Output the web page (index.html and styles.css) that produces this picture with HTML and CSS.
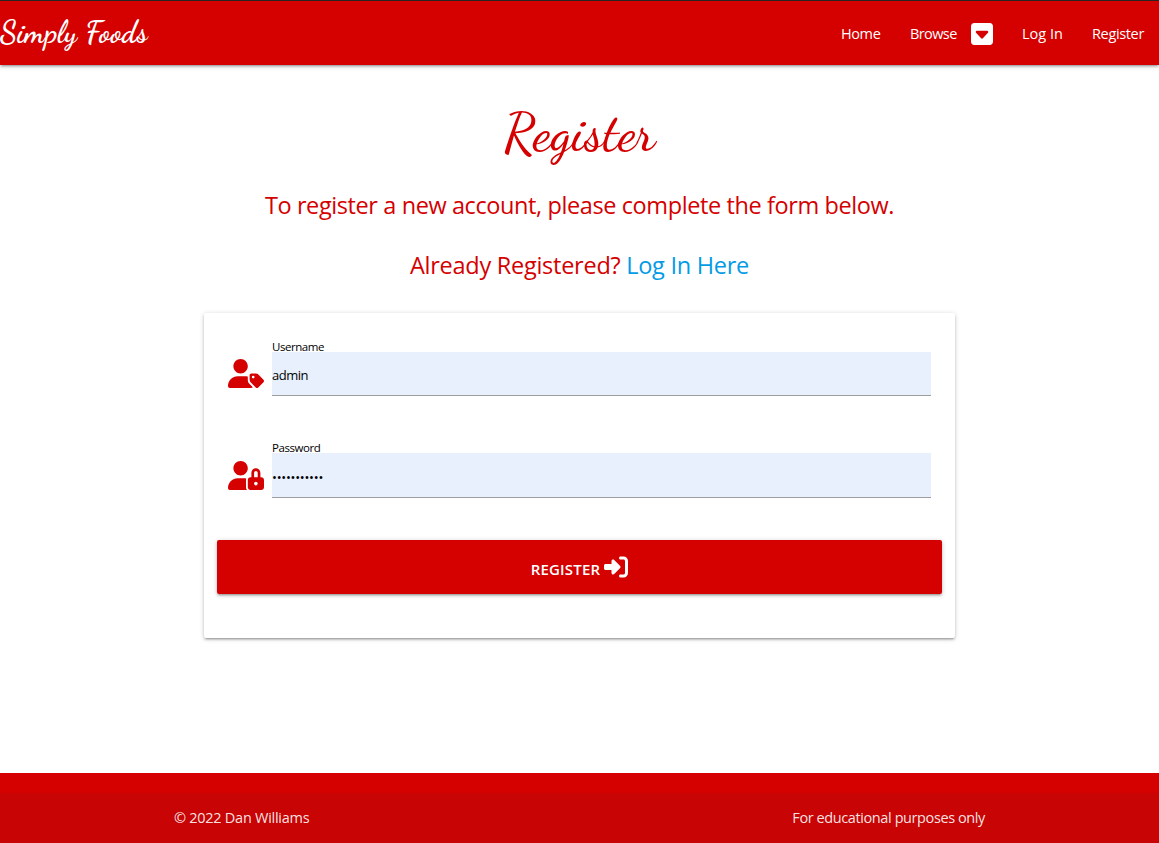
FILE: index.html
```html
<!DOCTYPE html>
<html lang="en">
<head>
<meta charset="utf-8">
<title>Simply Foods - Register</title>
<link rel="stylesheet" href="styles.css">
</head>
<body>
<header class="navbar">
  <a class="brand">Simply Foods</a>
  <nav class="nav-links">
    <a class="nav-home">Home</a>
    <a class="nav-browse">Browse</a>
    <svg class="caret-icon" viewBox="0 32 448 448"><path fill="#fff" d="M384 32H64C28.7 32 0 60.7 0 96v320c0 35.300 28.700 64 64 64h320c35.300 0 64-28.700 64-64V96c0-35.300-28.700-64-64-64zM345.600 232.300l-104 112C237 349.200 230.700 352 224 352s-13-2.800-17.600-7.700l-104-112c-6.500-7-8.200-17.200-4.400-25.900S110.500 192 120 192h208c9.500 0 18.200 5.700 22 14.400s2.100 18.900-4.400 25.900z"/></svg>
    <a class="nav-login">Log In</a>
    <a class="nav-register">Register</a>
  </nav>
</header>
<main class="content">
  <h1 class="title">Register</h1>
  <p class="lead lead-intro">To register a new account, please complete the form below.</p>
  <p class="lead lead-login">Already Registered? <a class="login-link">Log In Here</a></p>
  <form class="card">
    <div class="field">
      <svg class="field-icon" viewBox="0 0 640 512"><path fill="#d50000" d="M224 256c70.700 0 128-57.300 128-128S294.700 0 224 0 96 57.300 96 128s57.300 128 128 128zM352 368v-47c0-4 .5-8 1.500-12-24-4-48-5-79-5H173.300C77.600 304 0 381.700 0 477.400 0 496.500 15.500 512 34.700 512h378.600c11 0 20.500-5 27-13l-60-60c-18-18-28.300-43-28.300-71zM630.600 364.900l-90.300-90.200C528.300 262.700 512 256 495 256h-79c-18 0-32 14.300-32 32v79.300c0 16.900 6.700 33.200 18.700 45.200l90.300 90.200c12.500 12.500 32.800 12.500 45.300 0l92.300-92.500c12.500-12.500 12.500-32.800 0-45.300zM448 344a24 24 0 1 1 0-48 24 24 0 0 1 0 48z"/></svg>
      <label class="field-body"><span class="label label-user">Username</span><span class="input input-user">admin</span></label>
    </div>
    <div class="field field-password">
      <svg class="field-icon" viewBox="0 0 640 512"><path fill="#d50000" d="M224 256c70.700 0 128-57.310 128-128S294.700 0 224 0S96 57.310 96 128S153.300 256 224 256zM320 336c0-8.672 1.738-16.870 4.303-24.700C308.600 306.600 291.900 304 274.700 304H173.300C77.610 304 0 381.700 0 477.400C0 496.500 15.520 512 34.660 512h301.700C326.300 498.600 320 482.100 320 464V336zM592 288H576V212.700c0-41.840-30.030-80.040-71.660-84.270C456.500 123.600 416 161.100 416 208V288h-16C373.600 288 352 309.600 352 336v128c0 26.400 21.600 48 48 48h192c26.400 0 48-21.600 48-48v-128C640 309.600 618.400 288 592 288zM496 432c-17.620 0-32-14.380-32-32s14.380-32 32-32s32 14.380 32 32S513.600 432 496 432zM528 288h-64V208c0-17.620 14.380-32 32-32s32 14.380 32 32V288z"/></svg>
      <label class="field-body"><span class="label label-pass">Password</span><span class="input input-pass">•••••••••••</span></label>
    </div>
    <button class="submit" type="button"><span class="submit-text">Register</span><svg class="submit-icon" viewBox="0 0 512 512"><path fill="#fff" d="M217.900 105.900L340.700 228.700c7.200 7.200 11.300 17.100 11.300 27.300s-4.100 20.100-11.300 27.300L217.900 406.100c-6.400 6.400-15 9.900-24 9.900c-18.700 0-33.900-15.200-33.900-33.900l0-62.100L32 320c-17.700 0-32-14.300-32-32l0-64c0-17.700 14.300-32 32-32l128 0 0-62.100c0-18.700 15.200-33.900 33.900-33.900c9 0 17.600 3.600 24 9.900zM352 416l64 0c17.700 0 32-14.300 32-32l0-256c0-17.700-14.300-32-32-32l-64 0c-17.700 0-32-14.300-32-32s14.300-32 32-32l64 0c53 0 96 43 96 96l0 256c0 53-43 96-96 96l-64 0c-17.700 0-32-14.300-32-32s14.300-32 32-32z"/></svg></button>
  </form>
</main>
<footer class="footer">
  <div class="copyright"><span class="owner">© 2022 Dan Williams</span><span class="purpose">For educational purposes only</span></div>
</footer>
</body>
</html>
```
FILE: styles.css
```css
* { box-sizing: border-box; }
body {
  margin: 0;
  height: 843px;
  display: flex;
  flex-direction: column;
  overflow: hidden;
  background: #fff;
  font-family: "Segoe UI", "Open Sans", "Noto Sans", sans-serif;
}
.navbar {
  height: 65px;
  flex: none;
  display: flex;
  justify-content: space-between;
  align-items: center;
  padding-top: 1px;
  border-top: 1px solid #2a2225;
  background: #d50000;
  color: #fff;
  box-shadow: 0 2px 2px 0 rgba(0,0,0,.14), 0 3px 1px -2px rgba(0,0,0,.12), 0 1px 5px 0 rgba(0,0,0,.2);
}
.brand, .title {
  font-family: "Dancing Script", "Lato", cursive;
  white-space: nowrap;
}
.brand { font-size: 30px; font-weight: 700; margin-top: -4px; letter-spacing: .25px; }
.nav-links { display: flex; align-items: center; font-size: 14.5px; letter-spacing: -.4px; white-space: nowrap; }
.nav-home { width: 69px; }
.nav-browse { width: 61px; letter-spacing: -.6px; }
.caret-icon { width: 22px; height: 22px; margin-right: 29px; }
.nav-login { width: 70px; letter-spacing: 0; }
.nav-register { width: 67px; letter-spacing: -.35px; }
.content { flex: 1; display: flex; flex-direction: column; align-items: center; color: #d50000; }
.title { margin: 38px 0 0; height: 68px; line-height: 60px; font-size: 53px; font-weight: 500; }
.lead { margin: 0; font-size: 23.5px; line-height: 36px; white-space: nowrap; font-weight: 400; letter-spacing: -.4px; }
.lead-intro { margin-top: 16px; }
.lead-login { margin-top: 24px; letter-spacing: -.26px; }
.login-link { color: #039be5; }
.card {
  width: 751px;
  height: 325px;
  margin-top: 30px;
  padding: 26px 13px 0;
  border-radius: 2px;
  background: #fff;
  box-shadow: 0 2px 2px 0 rgba(0,0,0,.14), 0 3px 1px -2px rgba(0,0,0,.12), 0 1px 5px 0 rgba(0,0,0,.2);
}
.field { display: flex; padding: 0 11px; }
.field-password { margin-top: 44px; }
.field-icon { width: 36px; height: 29px; margin: 20px 8px 0 0; }
.field-password .field-icon { margin-top: 21px; }
.field-body { flex: 1; display: flex; flex-direction: column; color: #000; }
.label { height: 13px; line-height: 16px; font-size: 11.5px; letter-spacing: -.45px; }
.input { height: 44px; line-height: 46px; background: #e8f0fe; border-bottom: 1px solid #9e9e9e; font-size: 13px; letter-spacing: -.5px; }
.field-password .input { height: 45px; }
.field-password .input-pass { font-size: 13px; line-height: 48px; letter-spacing: -.25px; }
.submit {
  display: flex;
  align-items: center;
  justify-content: center;
  gap: 4px;
  width: 725px;
  height: 54px;
  margin-top: 42px;
  padding: 0;
  border: 0;
  border-radius: 2px;
  background: #d50000;
  color: #fff;
  font: 600 15px "Segoe UI", "Open Sans", sans-serif;
  letter-spacing: .2px;
  text-transform: uppercase;
  box-shadow: 0 2px 2px 0 rgba(0,0,0,.14), 0 3px 1px -2px rgba(0,0,0,.12), 0 1px 5px 0 rgba(0,0,0,.2);
}
.submit-text { padding-top: 4px; }
.submit-icon { width: 24px; height: 24px; margin-bottom: 1px; }
.footer { flex: none; height: 70px; padding-top: 20px; background: #d50000; }
.copyright {
  display: flex;
  justify-content: space-between;
  height: 50px;
  padding: 0 174px;
  line-height: 50px;
  font-size: 14.5px;
  letter-spacing: -.27px;
  color: rgba(255,255,255,.9);
  background: rgba(51,51,51,.08);
}
.purpose { letter-spacing: -.4px; }
```
